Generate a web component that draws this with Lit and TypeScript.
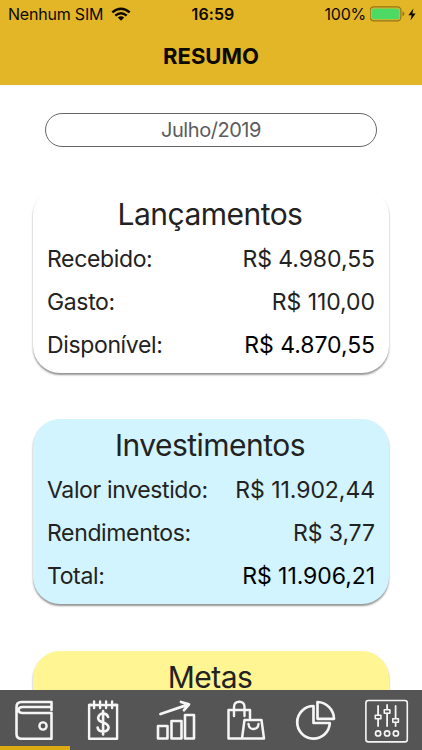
import { LitElement, html, svg, css } from "lit";
import { customElement, property, state } from "lit/decorators.js";
import { classMap } from "lit/directives/class-map.js";

type Row = { label: string; value: string; strong?: boolean };

@customElement("status-bar")
class StatusBar extends LitElement {
  static styles = css`
    :host { display: grid; grid-template-columns: 1fr auto 1fr; align-items: center; height: 28px; padding: 0 6px 0 8px; font-size: 16px; }
    .left, .right { display: flex; align-items: center; }
    .right { justify-content: flex-end; }
    .carrier { letter-spacing: -0.2px; }
    .wifi { width: 20px; height: 15px; margin-left: 8px; }
    .time { font-weight: 600; letter-spacing: 0.1px; position: relative; left: 1px; }
    .pct { letter-spacing: -0.25px; }
    .battery { width: 36px; height: 16px; margin-left: 4px; }
    .bolt { width: 8px; height: 13px; margin-left: 2px; }
  `;
  render() {
    return html`
      <div class="left">
        <span class="carrier">Nenhum SIM</span>
        <svg class="wifi" viewBox="0 0 20 15" fill="none" stroke="#0c0900" stroke-width="2.5">
          <path d="M1.3 5.4Q10-2 18.7 5.4M4.3 8.6Q10 3.8 15.7 8.6" />
          <path d="M6.8 10.6Q10 7.9 13.2 10.6L10 13.8Z" fill="#0c0900" stroke="none" />
        </svg>
      </div>
      <span class="time">16:59</span>
      <div class="right">
        <span class="pct">100%</span>
        <svg class="battery" viewBox="0 0 36 16">
          <rect x="0.1" y="0.8" width="30.8" height="14" rx="3.6" fill="none" stroke="#94741a" stroke-width="1.2" />
          <rect x="1.8" y="2.4" width="27.4" height="10.8" rx="2" fill="#4cd964" />
          <path d="M32.5 5.3Q34.5 6 34.5 7.8T32.5 10.3Z" fill="#94741a" />
        </svg>
        <svg class="bolt" viewBox="0 0 8 13"><path d="M5.4 0.6L0.4 7.3H3.6L2.5 12.4L7.6 5.4H4.4Z" fill="#0c0900" /></svg>
      </div>
    `;
  }
}

@customElement("summary-card")
class SummaryCard extends LitElement {
  @property() heading = "";
  @property() tone = "white";
  @property({ attribute: false }) rows: Row[] = [];
  static styles = css`
    :host { display: block; }
    .card { height: 185px; box-sizing: border-box; padding: 4px 14px 0; border-radius: 27px; color: #222; box-shadow: 0 2px 2px rgba(0, 0, 0, 0.42); }
    .white { background: #fff; }
    .blue { background: #d2f4ff; }
    .yellow { background: #fff593; }
    .heading { margin: 0 0 2px; padding-right: 2px; font-size: 30px; font-weight: 400; line-height: 44px; letter-spacing: -0.53px; text-align: center; }
    .row { display: flex; justify-content: space-between; height: 43px; line-height: 43px; font-size: 23px; white-space: nowrap; }
    .label { letter-spacing: -0.36px; }
    .value { letter-spacing: -0.06px; }
    .strong { color: #000; }
  `;
  render() {
    return html`<section class="card ${this.tone}">
      <h2 class="heading">${this.heading}</h2>
      ${this.rows.map(
        (r) => html`<div class="row"><span class="label">${r.label}</span><span class=${classMap({ value: true, strong: !!r.strong })}>${r.value}</span></div>`
      )}
    </section>`;
  }
}

const icons = [
  svg`<path d="M37 10V2H7Q2 2 2 7V34Q2 38.7 7 38.7H37V13H8Q4 13 4 10T8 7H36" stroke-width="2.6" transform="translate(-.5 0)"/><circle cx="28" cy="26" r="3.6" stroke-width="2.4"/>`,
  svg`<g transform="translate(-1.9 0)"><path d="M9 5H6V38.7H34V5H31" stroke-width="2.4"/><path d="M11 1.5V8M17 1.5V8M23 1.5V8M29 1.5V8M6 5H9M13 5H15M19 5H21M25 5H27M31 5H34" stroke-width="2.4"/><path d="M25 17Q24 13.5 20 13.5T15 18Q15 21 20 22.5T25.5 27.5Q25 31.5 20 31.5T14.5 27.5M20 11V34.5" stroke-width="2.6"/></g>`,
  svg`<path d="M2 26H11.5V38.5H2ZM15.5 21H25.5V38.5H15.5ZM29 15H38V38.5H29Z" stroke-width="2.6"/><path d="M4.5 14L32 4.6M25 2L33 4.4L28 10.2" stroke-width="2.8"/>`,
  svg`<path d="M16 38.5H2.5V10H24V18M16 38.5H38L35.5 20H18.5Z" stroke-width="2.5"/><path d="M8 16V7Q8 1.8 13.3 1.8T18.5 7V16M22.5 24Q23 29 27.5 29T32.5 24" stroke-width="2.4"/>`,
  svg`<path d="M17.5 6A16.3 16.3 0 1 0 33.8 23H17.5Z" stroke-width="2.7"/><path d="M21.5 2A17 17 0 0 1 38 18.8H21.5Z" stroke-width="2.7"/>`,
  svg`<g transform="translate(-.9 0)"><rect x="-0.2" y="0.5" width="41.4" height="41.4" rx="2.5" stroke-width="1.6"/><path d="M12 6V15M12 19V26M21 5V9M21 13.5V26M29.5 6V18M29.5 22.5V26" stroke-width="1.8"/><path d="M9.2 15.3H14.8V18.7H9.2ZM18.2 9.7H23.8V13.3H18.2ZM26.7 18.7H32.3V22.3H26.7Z" stroke-width="1.6"/><circle cx="12" cy="33.4" r="2.6" stroke-width="1.7"/><circle cx="21" cy="33.4" r="2.6" stroke-width="1.7"/><circle cx="29.8" cy="33.4" r="2.6" stroke-width="1.7"/></g>`,
];

@customElement("tab-bar")
class TabBar extends LitElement {
  @state() private active = 0;
  static styles = css`
    :host { display: flex; height: 60px; background: #555; }
    .tab { flex: 1; display: flex; justify-content: center; box-sizing: border-box; margin: 0; padding: 10px 0 0; border: 0; border-bottom: 4px solid transparent; background: none; }
    .active { border-bottom-color: #deaa12; }
    .icon { width: 40px; height: 42px; overflow: visible; flex: none; }
  `;
  render() {
    return icons.map(
      (icon, i) => html`<button class=${classMap({ tab: true, active: i === this.active })} @click=${() => (this.active = i)}>
        <svg class="icon" viewBox="0 0 40 42" fill="none" stroke="#f5f5f5" stroke-linejoin="round" stroke-linecap="round">${icon}</svg>
      </button>`
    );
  }
}

@customElement("app-root")
class AppRoot extends LitElement {
  static styles = css`
    :host { display: flex; flex-direction: column; height: 750px; overflow: hidden; background: #fff; font-family: Inter, "Liberation Sans", sans-serif; color: #0c0900; }
    .header { flex: none; height: 85px; background: #e3b627; }
    .title { margin: 0; font-size: 22px; line-height: 56px; font-weight: 700; text-align: center; }
    .content { flex: 1; min-height: 0; overflow: hidden; padding: 28px 33px 0; }
    .month { display: block; box-sizing: border-box; width: 332px; height: 34px; margin: 0 12px 41px; padding: 0; border: 1px solid #666; border-radius: 17px; background: #fff; font: inherit; font-size: 20px; line-height: 32px; letter-spacing: -0.45px; color: #5c5c5c; text-align: center; }
    .cards { display: flex; flex-direction: column; gap: 46.4px; }
  `;
  private lanc: Row[] = [
    { label: "Recebido:", value: "R$ 4.980,55" },
    { label: "Gasto:", value: "R$ 110,00" },
    { label: "Disponível:", value: "R$ 4.870,55", strong: true },
  ];
  private inv: Row[] = [
    { label: "Valor investido:", value: "R$ 11.902,44" },
    { label: "Rendimentos:", value: "R$ 3,77" },
    { label: "Total:", value: "R$ 11.906,21", strong: true },
  ];
  render() {
    return html`
      <header class="header">
        <status-bar></status-bar>
        <h1 class="title">RESUMO</h1>
      </header>
      <main class="content">
        <button class="month">Julho/2019</button>
        <div class="cards">
          <summary-card heading="Lançamentos" tone="white" .rows=${this.lanc}></summary-card>
          <summary-card heading="Investimentos" tone="blue" .rows=${this.inv}></summary-card>
          <summary-card heading="Metas" tone="yellow"></summary-card>
        </div>
      </main>
      <tab-bar></tab-bar>
    `;
  }
}
